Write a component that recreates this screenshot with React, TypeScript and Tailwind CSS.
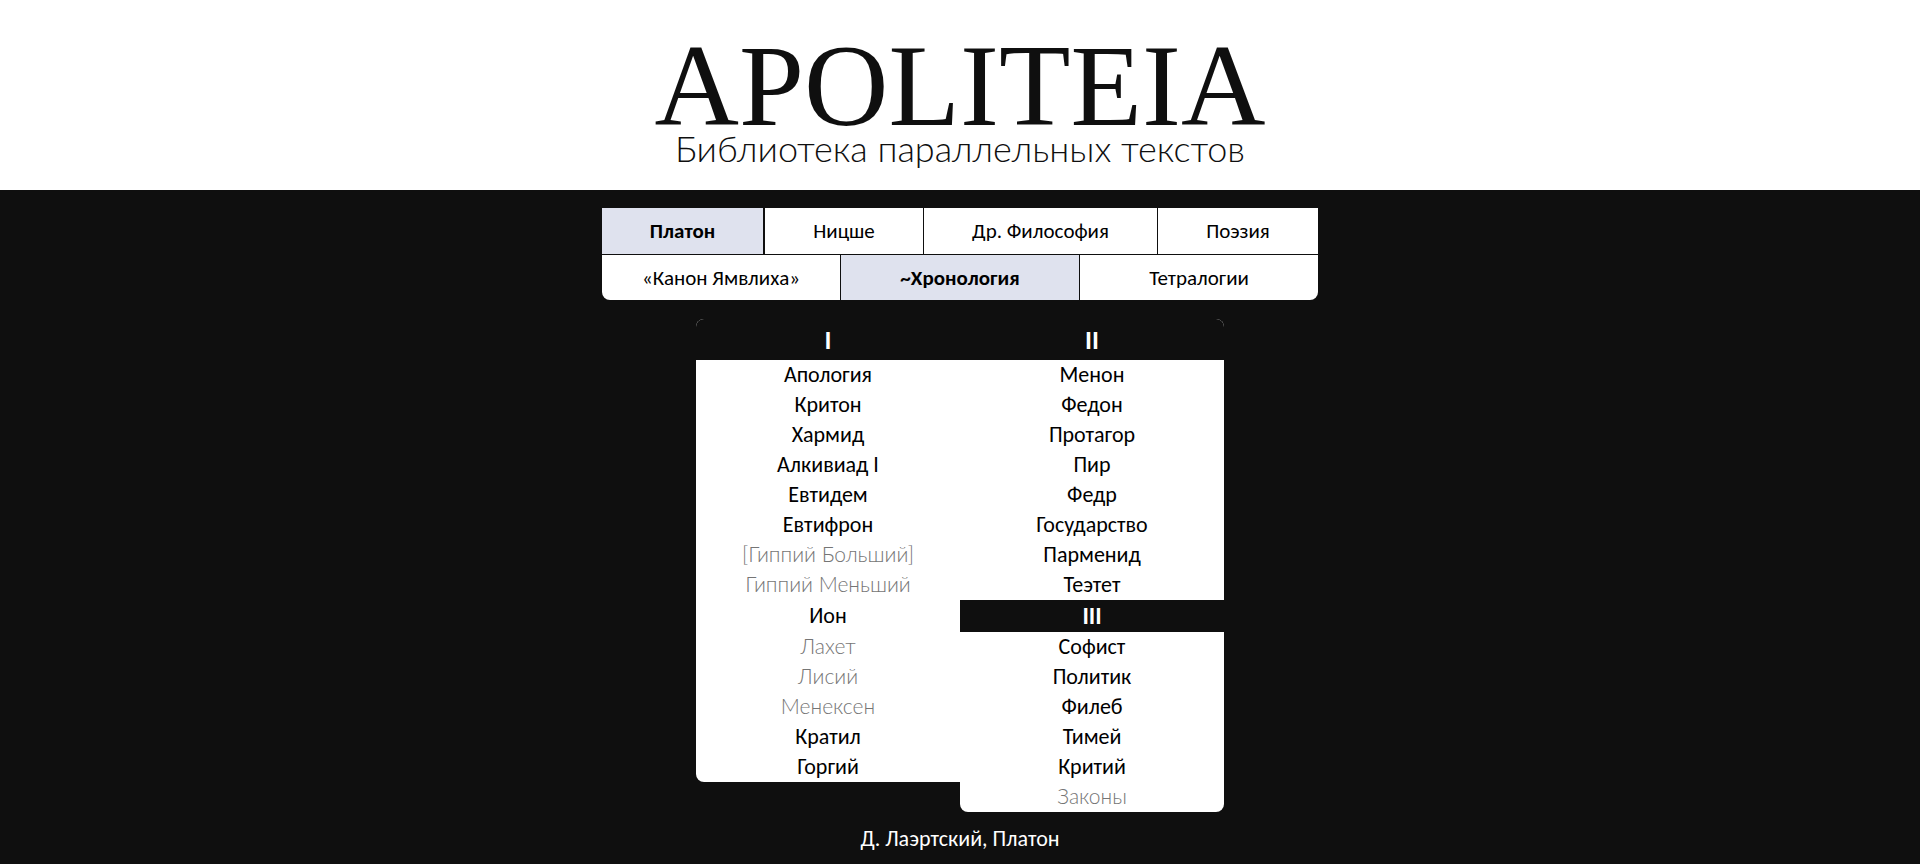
import React from "react";

type Work = { title: string; pending?: boolean };
type Cell = Work | { heading: string } | null;

const authors = [
  { name: "Платон", width: "w-[163px]", active: true },
  { name: "Ницше", width: "w-[159px]" },
  { name: "Др. Философия", width: "w-[234px]" },
  { name: "Поэзия", width: "w-[160px]" },
];

const orders = [
  { name: "«Канон Ямвлиха»" },
  { name: "~Хронология", active: true },
  { name: "Тетралогии" },
];

const rows: [Cell, Cell][] = [
  [{ title: "Апология" }, { title: "Менон" }],
  [{ title: "Критон" }, { title: "Федон" }],
  [{ title: "Хармид" }, { title: "Протагор" }],
  [{ title: "Алкивиад I" }, { title: "Пир" }],
  [{ title: "Евтидем" }, { title: "Федр" }],
  [{ title: "Евтифрон" }, { title: "Государство" }],
  [{ title: "[Гиппий Больший]", pending: true }, { title: "Парменид" }],
  [{ title: "Гиппий Меньший", pending: true }, { title: "Теэтет" }],
  [{ title: "Ион" }, { heading: "III" }],
  [{ title: "Лахет", pending: true }, { title: "Софист" }],
  [{ title: "Лисий", pending: true }, { title: "Политик" }],
  [{ title: "Менексен", pending: true }, { title: "Филеб" }],
  [{ title: "Кратил" }, { title: "Тимей" }],
  [{ title: "Горгий" }, { title: "Критий" }],
  [null, { title: "Законы", pending: true }],
];

function WorkCell({ cell, last }: { cell: Cell; last: string }) {
  if (!cell) return <td />;
  if ("heading" in cell) {
    return (
      <th scope="col" className="bg-[#0f0f0f] p-0 text-[24px] font-bold text-white">
        {cell.heading}
      </th>
    );
  }
  return (
    <td className={`bg-white p-0 ${last}`}>
      {cell.pending ? (
        <span className="block pb-0.5 font-[Lato,sans-serif] text-[21px] leading-[28px] font-light text-[#757575]">
          {cell.title}
        </span>
      ) : (
        <a href="#" className="block text-black">
          {cell.title}
        </a>
      )}
    </td>
  );
}

export default function App() {
  return (
    <div className="min-h-screen bg-[#0f0f0f] font-[Carlito,Lato,sans-serif] text-black">
      <header className="flex h-[190px] flex-col items-center bg-white pt-10 text-[#0f0f0f]">
        <h1 className="font-['Liberation_Serif',serif] text-[117px] leading-[92px]">APOLITEIA</h1>
        <p className="font-[Lato,sans-serif] text-[36px] leading-[32px] font-light">
          Библиотека параллельных текстов
        </p>
      </header>

      <main className="flex flex-col items-center pt-[18px]">
        <nav className="w-full max-w-[716px] overflow-hidden rounded-b-lg text-[21px]">
          <div className="flex border-b border-[#0f0f0f]">
            {authors.map((a) => (
              <a
                key={a.name}
                href="#"
                className={`flex h-[46px] items-center justify-center border-[#0f0f0f] pt-0.5 ${a.width} ${
                  a.active ? "border-r-2 bg-[#dfe2ee] font-bold" : "border-r bg-white last:border-r-0"
                }`}
              >
                {a.name}
              </a>
            ))}
          </div>
          <div className="grid grid-cols-3 gap-px">
            {orders.map((o) => (
              <a
                key={o.name}
                href="#"
                className={`flex h-[45px] items-center justify-center pt-0.5 ${
                  o.active ? "bg-[#dfe2ee] font-bold" : "bg-white"
                }`}
              >
                {o.name}
              </a>
            ))}
          </div>
        </nav>

        <table className="mt-[19px] w-full max-w-[528px] table-fixed border-collapse text-center text-[22px] leading-[30px]">
          <thead>
            <tr>
              <th scope="col" className="rounded-tl-lg bg-white p-0">
                <div className="flex h-[41px] items-center justify-center rounded-tl-lg bg-[#0f0f0f] text-[26px] font-bold text-white">
                  I
                </div>
              </th>
              <th scope="col" className="rounded-tr-lg bg-white p-0">
                <div className="flex h-[41px] items-center justify-center rounded-tr-lg bg-[#0f0f0f] text-[26px] font-bold text-white">
                  II
                </div>
              </th>
            </tr>
          </thead>
          <tbody>
            {rows.map(([left, right], i) => (
              <tr key={i} className={right && "heading" in right ? "h-8" : "h-[30px]"}>
                <WorkCell cell={left} last={i === rows.length - 2 ? "rounded-bl-lg" : ""} />
                <WorkCell cell={right} last={i === rows.length - 1 ? "rounded-b-lg" : ""} />
              </tr>
            ))}
          </tbody>
        </table>

        <a href="#" className="mt-3 text-[22px] leading-[30px] text-white">
          Д. Лаэртский, Платон
        </a>
      </main>
    </div>
  );
}
